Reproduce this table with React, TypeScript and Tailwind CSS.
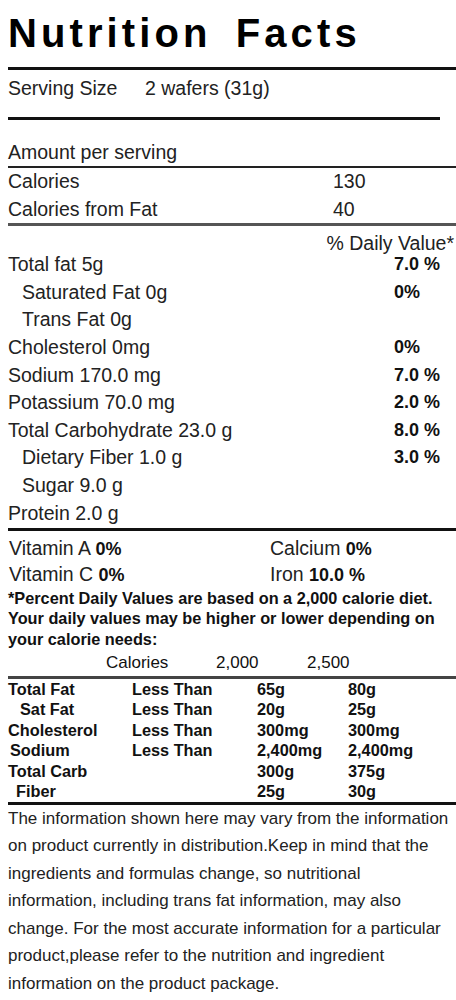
import React from "react";

const nutrients: { label: string; pct?: string; indent?: boolean }[] = [
  { label: "Total fat 5g", pct: "7.0 %" },
  { label: "Saturated Fat 0g", pct: "0%", indent: true },
  { label: "Trans Fat 0g", indent: true },
  { label: "Cholesterol 0mg", pct: "0%" },
  { label: "Sodium 170.0 mg", pct: "7.0 %" },
  { label: "Potassium 70.0 mg", pct: "2.0 %" },
  { label: "Total Carbohydrate 23.0 g", pct: "8.0 %" },
  { label: "Dietary Fiber 1.0 g", pct: "3.0 %", indent: true },
  { label: "Sugar 9.0 g", indent: true },
  { label: "Protein 2.0 g" },
];

const table: { label: string; pad: string; lt: string; a: string; b: string }[] = [
  { label: "Total Fat", pad: "pl-0", lt: "Less Than", a: "65g", b: "80g" },
  { label: "Sat Fat", pad: "pl-[12px]", lt: "Less Than", a: "20g", b: "25g" },
  { label: "Cholesterol", pad: "pl-0", lt: "Less Than", a: "300mg", b: "300mg" },
  { label: "Sodium", pad: "pl-[2px]", lt: "Less Than", a: "2,400mg", b: "2,400mg" },
  { label: "Total Carb", pad: "pl-0", lt: "", a: "300g", b: "375g" },
  { label: "Fiber", pad: "pl-[8px]", lt: "", a: "25g", b: "30g" },
];

export default function App() {
  return (
    <div className="w-[456px] h-[1000px] overflow-hidden bg-white text-[#111] font-['Liberation_Sans',Arial,sans-serif]">
      <div className="pl-2">
        <h1 className="pt-[13px] h-[53px] text-[40px] leading-[40px] font-bold tracking-[4.1px] [word-spacing:9px] text-black whitespace-nowrap">
          Nutrition Facts
        </h1>
        <div className="mt-[14px] h-[3px] bg-[#111]" />

        <div className="h-[37px] flex items-center text-[19.5px] leading-none text-[#222] whitespace-nowrap">
          <span className="w-[137px]">Serving Size</span>
          <span>2 wafers (31g)</span>
        </div>
        <div className="mt-[10px] h-[3px] w-[432px] bg-[#111]" />

        <div className="pt-[18px] h-[46px] text-[19.5px] leading-[28px] text-[#222]">Amount per serving</div>
        <div className="h-[2px] bg-[#222]" />

        <div className="text-[19.5px] text-[#222]">
          <div className="h-[27.5px] flex items-center">
            <span className="w-[325px]">Calories</span>
            <span>130</span>
          </div>
          <div className="h-[27.5px] flex items-center">
            <span className="w-[325px]">Calories from Fat</span>
            <span>40</span>
          </div>
        </div>
        <div className="h-[3px] bg-[#555]" />

        <div className="h-[25px] pt-[9px] leading-[16px] text-[19.5px] text-right pr-[2px] text-[#222]">
          % Daily Value*
        </div>

        <div className="text-[19.5px] text-[#222]">
          {nutrients.map((n) => (
            <div key={n.label} className="h-[27.6px] flex items-center whitespace-nowrap">
              <span className={`w-[386px] ${n.indent ? "pl-[14px]" : ""}`}>{n.label}</span>
              {n.pct && <span className="font-bold text-[18px] text-[#111]">{n.pct}</span>}
            </div>
          ))}
        </div>
        <div className="mt-[1px] h-[3px] bg-[#111]" />

        <div className="mt-[4px] text-[19.5px] text-[#222]">
          <div className="h-[26.5px] flex items-center pl-[1px]">
            <span className="w-[261px]">
              Vitamin A <b className="text-[18px] text-[#111]">0%</b>
            </span>
            <span>
              Calcium <b className="text-[18px] text-[#111]">0%</b>
            </span>
          </div>
          <div className="h-[26.5px] flex items-center pl-[1px]">
            <span className="w-[261px]">
              Vitamin C <b className="text-[18px] text-[#111]">0%</b>
            </span>
            <span>
              Iron <b className="text-[18px] text-[#111]">10.0 %</b>
            </span>
          </div>
        </div>

        <p className="text-[16.3px] leading-[20.5px] font-bold text-[#111] whitespace-nowrap">
          *Percent Daily Values are based on a 2,000 calorie diet.
          <br />
          Your daily values may be higher or lower depending on
          <br />
          your calorie needs:
        </p>

        <div className="h-[26.5px] flex items-center text-[17px] text-[#111] whitespace-nowrap">
          <span className="w-[98px]" />
          <span className="w-[110px]">Calories</span>
          <span className="w-[91px]">2,000</span>
          <span>2,500</span>
        </div>
        <div className="h-[3px] bg-[#444]" />

        <div className="text-[16.3px] font-bold text-[#111]">
          {table.map((r) => (
            <div key={r.label} className="h-[20.5px] flex items-center whitespace-nowrap">
              <span className={`w-[124px] ${r.pad}`}>{r.label}</span>
              <span className="w-[125px]">{r.lt}</span>
              <span className="w-[91px]">{r.a}</span>
              <span>{r.b}</span>
            </div>
          ))}
        </div>
        <div className="h-[3px] bg-[#111]" />

        <p className="text-[17px] leading-[27.5px] text-[#222] whitespace-nowrap">
          The information shown here may vary from the information
          <br />
          on product currently in distribution.Keep in mind that the
          <br />
          ingredients and formulas change, so nutritional
          <br />
          information, including trans fat information, may also
          <br />
          change. For the most accurate information for a particular
          <br />
          product,please refer to the nutrition and ingredient
          <br />
          information on the product package.
        </p>
      </div>
    </div>
  );
}
